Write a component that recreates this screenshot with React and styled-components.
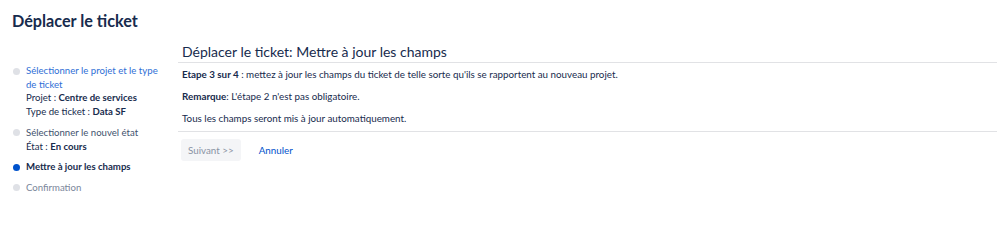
import React from "react";
import styled, { createGlobalStyle } from "styled-components";

const GlobalStyle = createGlobalStyle`
  body {
    margin: 0;
    background: #fff;
    font-family: "Lato", "Open Sans", sans-serif;
    color: #172b4d;
  }
`;

const Page = styled.div`
  padding: 8px 12px 0 12px;
`;

const Title = styled.h1`
  margin: 0;
  font-size: 16.2px;
  line-height: 26px;
  font-weight: 700;
  color: #172b4d;
`;

const Layout = styled.div`
  display: flex;
  margin-top: 8px;
`;

const Steps = styled.ol`
  list-style: none;
  margin: 22px 16px 0 0;
  padding: 0;
  width: 150px;
  flex-shrink: 0;
`;

const Step = styled.li`
  display: flex;
  gap: 6px;
  margin-bottom: 7px;
  font-size: 9.6px;
  line-height: 13.7px;
  color: ${(p) => (p.muted ? "#7a869a" : "#42526e")};
  font-weight: ${(p) => (p.current ? 700 : 400)};

  ${(p) => p.current && "color: #172b4d;"}
`;

const Dot = styled.span`
  width: 7px;
  height: 7px;
  border-radius: 50%;
  margin: 3.5px 0 0 1px;
  flex-shrink: 0;
  background: ${(p) => (p.current ? "#0052cc" : "#dfe1e6")};
`;

const StepLink = styled.a`
  color: #2f6fd6;
  text-decoration: none;
`;

const Meta = styled.div`
  color: #172b4d;

  b {
    font-weight: 700;
  }
`;

const Main = styled.div`
  flex: 1;
  margin-right: -12px;
`;

const Heading = styled.h2`
  margin: 0;
  padding: 0 4px;
  font-size: 14px;
  line-height: 20px;
  font-weight: 400;
  color: #172b4d;
  border-bottom: 1px solid #e1e2e5;
`;

const Body = styled.div`
  padding: 4px 4px 4px;
  border-bottom: 1px solid #e1e2e5;
`;

const Para = styled.p`
  margin: 0 0 8px 0;
  font-size: 9.8px;
  line-height: 14px;
  color: #172b4d;

  &:last-child {
    margin-bottom: 2px;
  }

  b {
    font-weight: 700;
  }
`;

const Actions = styled.div`
  display: flex;
  align-items: center;
  gap: 10px;
  padding: 7px 3px;
`;

const Button = styled.button`
  font-family: inherit;
  font-size: 9.8px;
  padding: 0 ${(p) => (p.disabled ? "7px" : "8px")};
  height: 22px;
  border: none;
  border-radius: 3px;
  background: ${(p) => (p.disabled ? "#f4f5f7" : "transparent")};
  color: ${(p) => (p.disabled ? "#8993a4" : "#0052cc")};
  cursor: ${(p) => (p.disabled ? "default" : "pointer")};
`;

export default function App() {
  return (
    <>
      <GlobalStyle />
      <Page>
        <Title>Déplacer le ticket</Title>
        <Layout>
          <Steps>
            <Step>
              <Dot />
              <div>
                <StepLink href="#">Sélectionner le projet et le type de ticket</StepLink>
                <Meta>
                  Projet : <b>Centre de services</b>
                </Meta>
                <Meta>
                  Type de ticket : <b>Data SF</b>
                </Meta>
              </div>
            </Step>
            <Step>
              <Dot />
              <div>
                Sélectionner le nouvel état
                <Meta>
                  État : <b>En cours</b>
                </Meta>
              </div>
            </Step>
            <Step current>
              <Dot current />
              <div>Mettre à jour les champs</div>
            </Step>
            <Step muted>
              <Dot />
              <div>Confirmation</div>
            </Step>
          </Steps>
          <Main>
            <Heading>Déplacer le ticket: Mettre à jour les champs</Heading>
            <Body>
              <Para>
                <b>Etape 3 sur 4</b> : mettez à jour les champs du ticket de telle sorte qu'ils se rapportent au nouveau projet.
              </Para>
              <Para>
                <b>Remarque</b>: L'étape 2 n'est pas obligatoire.
              </Para>
              <Para>Tous les champs seront mis à jour automatiquement.</Para>
            </Body>
            <Actions>
              <Button disabled>Suivant &gt;&gt;</Button>
              <Button>Annuler</Button>
            </Actions>
          </Main>
        </Layout>
      </Page>
    </>
  );
}
